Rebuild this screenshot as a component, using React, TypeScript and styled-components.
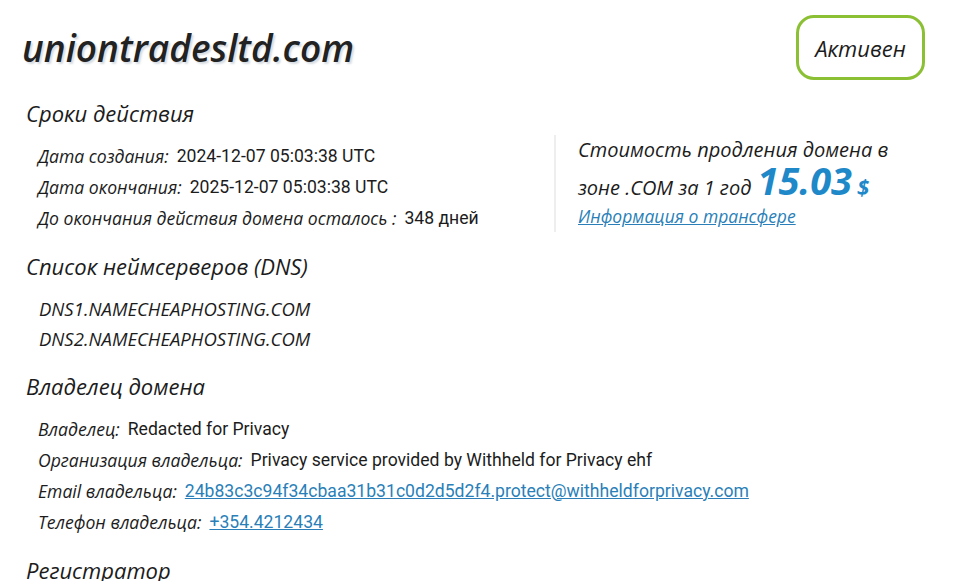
import React from "react";
import styled, { createGlobalStyle } from "styled-components";

const GlobalStyle = createGlobalStyle`
  body {
    margin: 0;
    background: #ffffff;
    font-family: "Open Sans", "Liberation Sans", sans-serif;
    color: #1c1c1c;
  }
`;

const Page = styled.div`
  padding: 15px 31px 0 22px;
`;

const Header = styled.header`
  display: flex;
  align-items: center;
  justify-content: space-between;
  margin-bottom: 18px;
`;

const DomainTitle = styled.h1`
  margin: 0;
  font-size: 37px;
  line-height: 44px;
  font-style: italic;
  font-weight: 600;
  color: #222;
  text-shadow: 2px 2px 2px rgba(120, 140, 160, 0.3);
`;

const StatusBadge = styled.div`
  box-sizing: border-box;
  width: 129px;
  height: 65px;
  border: 3px solid #8bc034;
  border-radius: 18px;
  display: flex;
  align-items: center;
  justify-content: center;
  font-style: italic;
  font-size: 22px;
  color: #1c1c1c;
`;

const Section = styled.section`
  margin-bottom: 18px;
`;

const SectionTitle = styled.h2`
  margin: 0 0 12px 4px;
  font-size: 22px;
  line-height: 30px;
  font-style: italic;
  font-weight: 400;
  color: #1c1c1c;
`;

const Split = styled.div`
  display: grid;
  grid-template-columns: 532px 2px 1fr;
  align-items: start;
  height: 93px;
`;

const Divider = styled.div`
  width: 2px;
  height: 97px;
  margin-top: -5px;
  background: #eeeeee;
`;

const Rows = styled.div`
  padding-left: 16px;
`;

const Row = styled.div<{ $h?: number }>`
  display: flex;
  align-items: center;
  height: ${(p) => p.$h ?? 31}px;
  white-space: nowrap;
`;

const Label = styled.span`
  font-style: italic;
  font-size: 17.6px;
  margin-right: 8px;
`;

const Value = styled.span`
  font-family: Roboto, "Liberation Sans", sans-serif;
  font-size: 17.6px;
  color: #1c1c1c;
`;

const LinkValue = styled.a`
  font-family: Roboto, "Liberation Sans", sans-serif;
  font-size: 17.6px;
  color: #2a7fb8;
  text-decoration: underline;
`;

const Mono = styled.span`
  font-style: italic;
  font-size: 18.5px;
  text-transform: uppercase;
  padding-left: 1px;
`;

const PriceBox = styled.div`
  padding-left: 22px;
  margin-top: -5px;
`;

const PriceLine = styled.div<{ $h: number; $shift?: number }>`
  box-sizing: border-box;
  font-style: italic;
  font-size: 20px;
  height: ${(p) => p.$h + (p.$shift ?? 0)}px;
  line-height: ${(p) => p.$h}px;
  margin-top: ${(p) => -(p.$shift ?? 0)}px;
  white-space: nowrap;
`;

const Price = styled.span`
  font-size: 38px;
  font-weight: 700;
  color: #1e88c8;
  margin-left: 6px;
`;

const Currency = styled.span`
  font-size: 22px;
  font-weight: 700;
  color: #1e88c8;
  margin-left: 5px;
`;

const TransferLink = styled.a`
  display: block;
  font-style: italic;
  font-size: 17.5px;
  line-height: 31px;
  color: #2a7fb8;
  text-decoration: underline;
`;

export default function App() {
  return (
    <>
      <GlobalStyle />
      <Page>
        <Header>
          <DomainTitle>uniontradesltd.com</DomainTitle>
          <StatusBadge>Активен</StatusBadge>
        </Header>

        <Section>
          <SectionTitle>Сроки действия</SectionTitle>
          <Split>
            <Rows>
              <Row>
                <Label>Дата создания:</Label>
                <Value>2024-12-07 05:03:38 UTC</Value>
              </Row>
              <Row>
                <Label>Дата окончания:</Label>
                <Value>2025-12-07 05:03:38 UTC</Value>
              </Row>
              <Row>
                <Label>До окончания действия домена осталось :</Label>
                <Value>348 дней</Value>
              </Row>
            </Rows>
            <Divider />
            <PriceBox>
              <PriceLine $h={30}>Стоимость продления домена в</PriceLine>
              <PriceLine $h={36} $shift={3}>
                зоне .COM за 1 год
                <Price>15.03</Price>
                <Currency>$</Currency>
              </PriceLine>
              <TransferLink href="#">Информация о трансфере</TransferLink>
            </PriceBox>
          </Split>
        </Section>

        <Section>
          <SectionTitle>Список неймсерверов (DNS)</SectionTitle>
          <Rows>
            <Row $h={30}>
              <Mono>DNS1.NAMECHEAPHOSTING.COM</Mono>
            </Row>
            <Row $h={30}>
              <Mono>DNS2.NAMECHEAPHOSTING.COM</Mono>
            </Row>
          </Rows>
        </Section>

        <Section>
          <SectionTitle>Владелец домена</SectionTitle>
          <Rows>
            <Row>
              <Label>Владелец:</Label>
              <Value>Redacted for Privacy</Value>
            </Row>
            <Row>
              <Label>Организация владельца:</Label>
              <Value>Privacy service provided by Withheld for Privacy ehf</Value>
            </Row>
            <Row>
              <Label>Email владельца:</Label>
              <LinkValue href="#">24b83c3c94f34cbaa31b31c0d2d5d2f4.protect@withheldforprivacy.com</LinkValue>
            </Row>
            <Row>
              <Label>Телефон владельца:</Label>
              <LinkValue href="#">+354.4212434</LinkValue>
            </Row>
          </Rows>
        </Section>

        <Section>
          <SectionTitle>Регистратор</SectionTitle>
        </Section>
      </Page>
    </>
  );
}
